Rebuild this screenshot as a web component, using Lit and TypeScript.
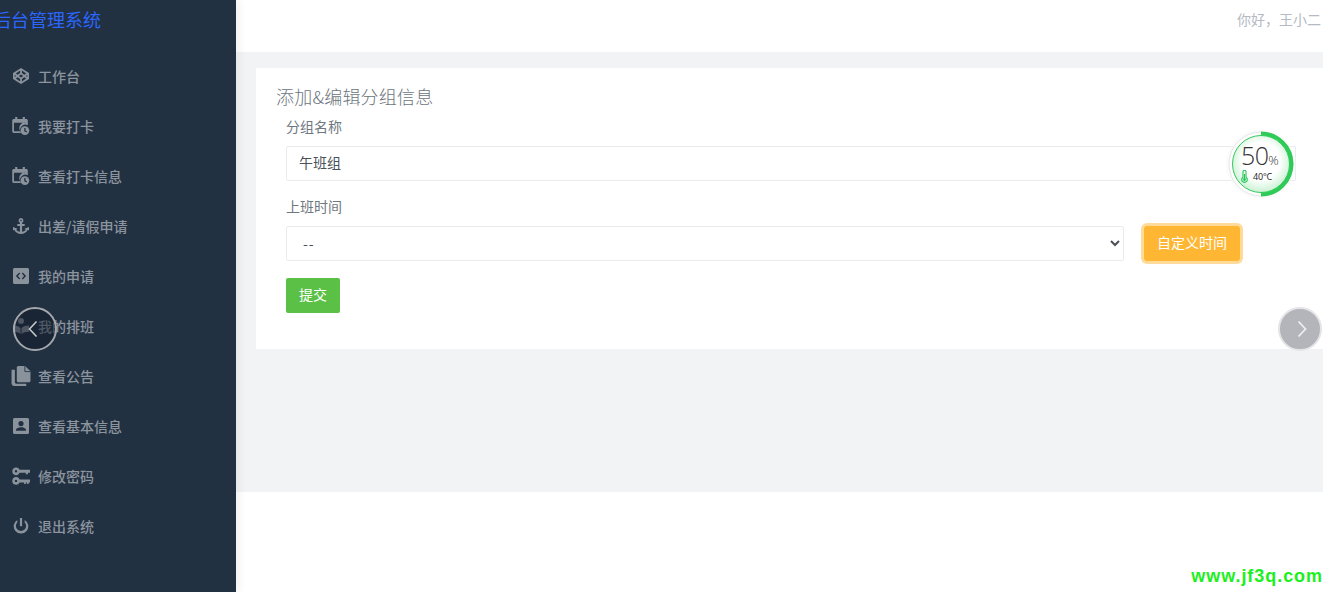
import { css, html, LitElement, svg } from "lit";
import { customElement } from "lit/decorators.js";

const ICONS = {
  codepen: svg`<path fill-rule="evenodd" d="M8 0 0 5v6l8 5 8-5V5L8 0Zm-.9 2.400v2.700L4.700 6.700 2.800 5.400l4.300-3Zm1.800 0 4.300 3-1.900 1.300-2.400-1.600V2.400ZM8 6.500 10.200 8 8 9.500 5.800 8 8 6.500ZM1.700 7l1.500 1-1.500 1V7Zm12.600 0v2l-1.500-1 1.500-1ZM4.700 9.300l2.400 1.600v2.700l-4.300-3 1.900-1.300Zm6.600 0 1.900 1.300-4.300 3v-2.700l2.400-1.600Z"/>`,
  calendar: svg`<path fill-rule="evenodd" d="M3 0h2.200v2h5.600V0H13v2h1.500c.8 0 1.500.7 1.500 1.500v5a5.500 5.500 0 0 0-7 8H1.500C.7 16.500 0 15.800 0 15v-11.500C0 2.700.7 2 1.500 2H3V0Zm-1.200 6v8.700h6.700a5.500 5.500 0 0 1 5.700-8.700H1.800Z"/><circle cx="13" cy="14" r="4.500"/><path d="M13 11.400v2.900l2 1.100" fill="none" stroke="#223142" stroke-width="1.300"/>`,
  anchor: svg`<path fill-rule="evenodd" d="M8 0a2.500 2.500 0 0 0-1.100 4.700V6H4.300v2.100h2.600v5.600c-1.600-.2-3-1-3.600-2l1.200-.9L0 9v3.500l1.200-.8C2.300 14.300 5 16 8 16s5.700-1.700 6.800-4.300l1.200.8V9l-4.500 1.800 1.200.9c-.6 1-2 1.800-3.600 2V8.100h2.600V6H9.100V4.700A2.500 2.500 0 0 0 8 0Zm0 1.700a.8.8 0 1 1 0 1.600.8.8 0 0 1 0-1.600Z"/>`,
  code: svg`<path fill-rule="evenodd" d="M1.500 0h13c.8 0 1.500.7 1.500 1.500v13c0 .8-.7 1.500-1.500 1.500h-13C.7 16 0 15.300 0 14.500v-13C0 .7.700 0 1.500 0Zm4.700 4.400L2.900 8l3.300 3.600 1-1L4.900 8l2.300-2.600-1-1Zm3.600 0-1 1L11.100 8l-2.300 2.600 1 1L13.100 8 9.800 4.400Z"/>`,
  book: svg`<circle cx="8" cy="3" r="3"/><path d="M0 7.500C3 7.500 6 8.300 7.500 10v6C6 14.500 3 13.800 0 13.800V7.500Zm16 0c-3 0-6 .8-7.500 2.500v6c1.500-1.500 4.500-2.200 7.500-2.200V7.500Z"/>`,
  files: svg`<path d="M7 0h6.500L18.500 5v9c0 .8-.7 1.500-1.500 1.500H7c-.8 0-1.500-.7-1.500-1.500V1.500C5.500.7 6.200 0 7 0Z"/><path d="M13.200 0v5.300h5.300" fill="none" stroke="#223142" stroke-width=".8"/><path d="M3.700 3.500v12c0 .8.500 1.300 1.300 1.300h9.500v2.200H3c-1.500 0-2.500-1-2.500-2.500v-13h3.200Z"/>`,
  person: svg`<path fill-rule="evenodd" d="M1.500 0h13c.8 0 1.500.7 1.500 1.500v13c0 .8-.7 1.500-1.500 1.500h-13C.7 16 0 15.300 0 14.500v-13C0 .7.700 0 1.500 0ZM8 3a2.600 2.600 0 1 0 0 5.200A2.600 2.600 0 0 0 8 3ZM3 12.800h10v-1c0-1.600-3.300-2.500-5-2.500s-5 .9-5 2.500v1Z"/>`,
  keys: svg`<path fill-rule="evenodd" d="M4 0a3.800 3.800 0 0 1 3.600 2.300H18v3h-2v1.400h-2.200V5.300H7.600A3.800 3.800 0 1 1 4 0Zm0 2.600a1.200 1.200 0 1 0 0 2.400 1.200 1.200 0 0 0 0-2.400ZM4 9.600a3.800 3.800 0 0 1 3.600 2.300H18v3h-1.300v1.500h-1.800v-1.500h-1v1.500h-1.800v-1.500H7.600A3.800 3.800 0 1 1 4 9.600Zm0 2.600a1.200 1.200 0 1 0 0 2.400 1.200 1.200 0 0 0 0-2.400Z"/>`,
  power: svg`<path d="M6.900 0h2.200v8.200H6.900z"/><path d="M4.300 1.900v2.500a5.100 5.100 0 1 0 7.400 0V1.900a7.300 7.300 0 1 1-7.400 0Z"/>`,
};

type IconName = keyof typeof ICONS;

const MENU: { label: string; icon: IconName; box: string; size: number }[] = [
  { label: "工作台", icon: "codepen", box: "0 0 16 16", size: 16 },
  { label: "我要打卡", icon: "calendar", box: "0 0 18 18.500", size: 18 },
  { label: "查看打卡信息", icon: "calendar", box: "0 0 18 18.500", size: 18 },
  { label: "出差/请假申请", icon: "anchor", box: "0 0 16 16", size: 16 },
  { label: "我的申请", icon: "code", box: "0 0 16 16", size: 16 },
  { label: "我的排班", icon: "book", box: "0 0 16 16", size: 16 },
  { label: "查看公告", icon: "files", box: "0 0 19 19", size: 20 },
  { label: "查看基本信息", icon: "person", box: "0 0 16 16", size: 16 },
  { label: "修改密码", icon: "keys", box: "0 0 18 17", size: 18 },
  { label: "退出系统", icon: "power", box: "0 0 16 16", size: 16 },
];

@customElement("app-root")
export class AppRoot extends LitElement {
  static styles = css`
    :host {
      display: grid;
      grid-template-columns: 236px 1fr;
      position: relative;
      width: 100%;
      height: 592px;
      overflow: hidden;
      background: #fff;
      font-family: "Noto Sans CJK SC", "Liberation Sans", sans-serif;
      font-size: 14px;
    }

    .sidebar {
      background: #223142;
      box-shadow: 4px 0 8px rgba(0, 0, 0, 0.05);
      z-index: 1;
    }

    .brand {
      height: 38px;
      margin-left: -7px;
      color: #2a66ff;
      font-size: 18px;
      line-height: 38px;
      white-space: nowrap;
    }

    .menu {
      margin: 13px 0 0;
      padding: 0;
      list-style: none;
    }

    .menu li {
      display: flex;
      align-items: center;
      height: 50px;
      color: #8c949e;
      font-weight: 500;
    }

    .icon-cell {
      display: flex;
      justify-content: center;
      width: 18px;
      margin: 0 8px 0 12px;
    }

    .icon-cell svg {
      fill: #8a929c;
      flex: none;
    }

    .main {
      display: flex;
      flex-direction: column;
      min-width: 0;
    }

    .topbar {
      display: flex;
      justify-content: flex-end;
      height: 52px;
      padding: 10px 2px 0 0;
      box-sizing: border-box;
      background: #fff;
      color: #b4b9c4;
      font-size: 14px;
      line-height: 18px;
    }

    .content {
      height: 440px;
      padding: 16px 0 0 20px;
      box-sizing: border-box;
      background: #f2f3f5;
    }

    .card {
      height: 281px;
      padding: 17px 20px 0;
      box-sizing: border-box;
      background: #fff;
    }

    h4 {
      margin: 0;
      color: #6c757d;
      font-size: 18px;
      font-weight: 300;
      line-height: 22px;
      letter-spacing: 0.2px;
    }

    .fields {
      padding: 9px 0 0 10px;
    }

    label {
      display: block;
      color: #6f7780;
      line-height: 20px;
    }

    .name-label {
      margin-bottom: 10px;
    }

    .time-label {
      margin: 15px 0 10px;
    }

    input,
    select {
      height: 35px;
      box-sizing: border-box;
      border: 1px solid #e9ecef;
      border-radius: 2px;
      background-color: #fff;
      color: #495057;
      font: inherit;
      outline: none;
    }

    input {
      display: block;
      width: 1010px;
      padding: 0 12px 3px;
    }

    .time-row {
      display: flex;
      gap: 20px;
      align-items: center;
      width: 1010px;
    }

    select {
      width: 838px;
      padding: 0 12px 2px;
      letter-spacing: 1px;
    }

    button {
      border: 0;
      border-radius: 2px;
      color: #fff;
      font: inherit;
    }

    .custom {
      width: 96px;
      height: 35px;
      padding: 0 0 3px;
      background: #ffb733;
      box-shadow: 0 0 0 3px #ffdb99;
      border-radius: 3px;
    }

    .submit {
      display: block;
      width: 54px;
      height: 35px;
      margin-top: 17px;
      padding: 0 0 3px;
      background: #5bc146;
    }

    .gauge {
      position: absolute;
      left: 1226px;
      top: 129px;
      width: 70px;
      height: 70px;
    }

    .gauge-text {
      position: absolute;
      inset: 0;
      color: #333;
      font-family: "Open Sans", "Liberation Sans", sans-serif;
    }

    .pct {
      position: absolute;
      left: 15px;
      top: 12px;
      font-size: 25px;
      font-weight: 300;
      line-height: 28px;
      letter-spacing: -0.6px;
    }

    .pct small {
      font-size: 13px;
    }

    .temp {
      position: absolute;
      left: 27px;
      top: 41px;
      color: #222;
      font-size: 9px;
      line-height: 14px;
      letter-spacing: -0.2px;
    }

    .thermo {
      position: absolute;
      left: 15px;
      top: 41px;
    }

    .nav {
      position: absolute;
      top: 307px;
      width: 44px;
      height: 44px;
      box-sizing: border-box;
      border-radius: 50%;
      display: flex;
      align-items: center;
      justify-content: center;
      z-index: 2;
    }

    .nav.prev {
      left: 13px;
      padding-right: 4px;
      border: 2px solid #a4a7ac;
      background: rgba(15, 25, 40, 0.5);
    }

    .nav.next {
      left: 1278px;
      padding-left: 3px;
      border: 2px solid #e4e4e6;
      background: #b4b5ba;
    }

    .watermark {
      position: absolute;
      right: 0;
      bottom: 5px;
      color: #1cf01c;
      font-family: "Liberation Sans", sans-serif;
      font-size: 18px;
      font-weight: 700;
      line-height: 22px;
      letter-spacing: 0.95px;
      white-space: nowrap;
      z-index: 3;
    }
  `;

  private renderGauge() {
    return html`<div class="gauge">
      <svg width="70" height="70" viewBox="0 0 70 70">
        <defs>
          <radialGradient id="gaugeFill" cx="50%" cy="45%" r="55%">
            <stop offset="60%" stop-color="#fff"></stop>
            <stop offset="100%" stop-color="#c9f2d3"></stop>
          </radialGradient>
        </defs>
        <circle cx="35" cy="35" r="35" fill="#f8f8f8" fill-opacity="0.6"></circle>
        <circle cx="35" cy="35" r="32" fill="#fff" stroke="#e6e6e6" stroke-width="1"></circle>
        <circle cx="35" cy="35" r="28.500" fill="url(#gaugeFill)" stroke="#36c85c" stroke-width="1"></circle>
        <path d="M35 4.500a30.500 30.500 0 0 1 0 61" fill="none" stroke="#2fcb58" stroke-width="4"></path>
      </svg>
      <div class="gauge-text">
        <span class="pct">50<small>%</small></span>
        <svg class="thermo" width="7" height="13" viewBox="0 0 7 13">
          <path
            d="M2 1.800a1.500 1.500 0 0 1 3 0v5.400a2.800 2.800 0 1 1-3 0Z"
            fill="none"
            stroke="#25c356"
            stroke-width="1.100"
          ></path>
          <path d="M3 4h1v5H3z" fill="#25c356"></path>
          <circle cx="3.500" cy="9.500" r="1.400" fill="#25c356"></circle>
        </svg>
        <span class="temp">40°C</span>
      </div>
    </div>`;
  }

  protected render() {
    return html`
      <aside class="sidebar">
        <div class="brand">后台管理系统</div>
        <ul class="menu">
          ${MENU.map(
            (item) => html`<li>
              <span class="icon-cell">
                <svg width=${item.size} height=${item.size} viewBox=${item.box}>
                  ${ICONS[item.icon]}
                </svg>
              </span>
              ${item.label}
            </li>`,
          )}
        </ul>
      </aside>
      <div class="main">
        <header class="topbar">你好，王小二</header>
        <main class="content">
          <section class="card">
            <h4>添加&编辑分组信息</h4>
            <div class="fields">
              <label class="name-label">分组名称</label>
              <input type="text" .value=${"午班组"} />
              <label class="time-label">上班时间</label>
              <div class="time-row">
                <select><option>--</option></select>
                <button class="custom">自定义时间</button>
              </div>
              <button class="submit">提交</button>
            </div>
          </section>
        </main>
      </div>
      ${this.renderGauge()}
      <div class="nav prev">
        <svg width="12" height="18" viewBox="0 0 12 18">
          <path d="M9.500 1.500 2.500 9l7 7.500" fill="none" stroke="#c4c7cb" stroke-width="1.600"></path>
        </svg>
      </div>
      <div class="nav next">
        <svg width="12" height="18" viewBox="0 0 12 18">
          <path d="m2.500 1.500 7 7.500-7 7.500" fill="none" stroke="#eeeeef" stroke-width="1.800"></path>
        </svg>
      </div>
      <div class="watermark">www.jf3q.com</div>
    `;
  }
}
